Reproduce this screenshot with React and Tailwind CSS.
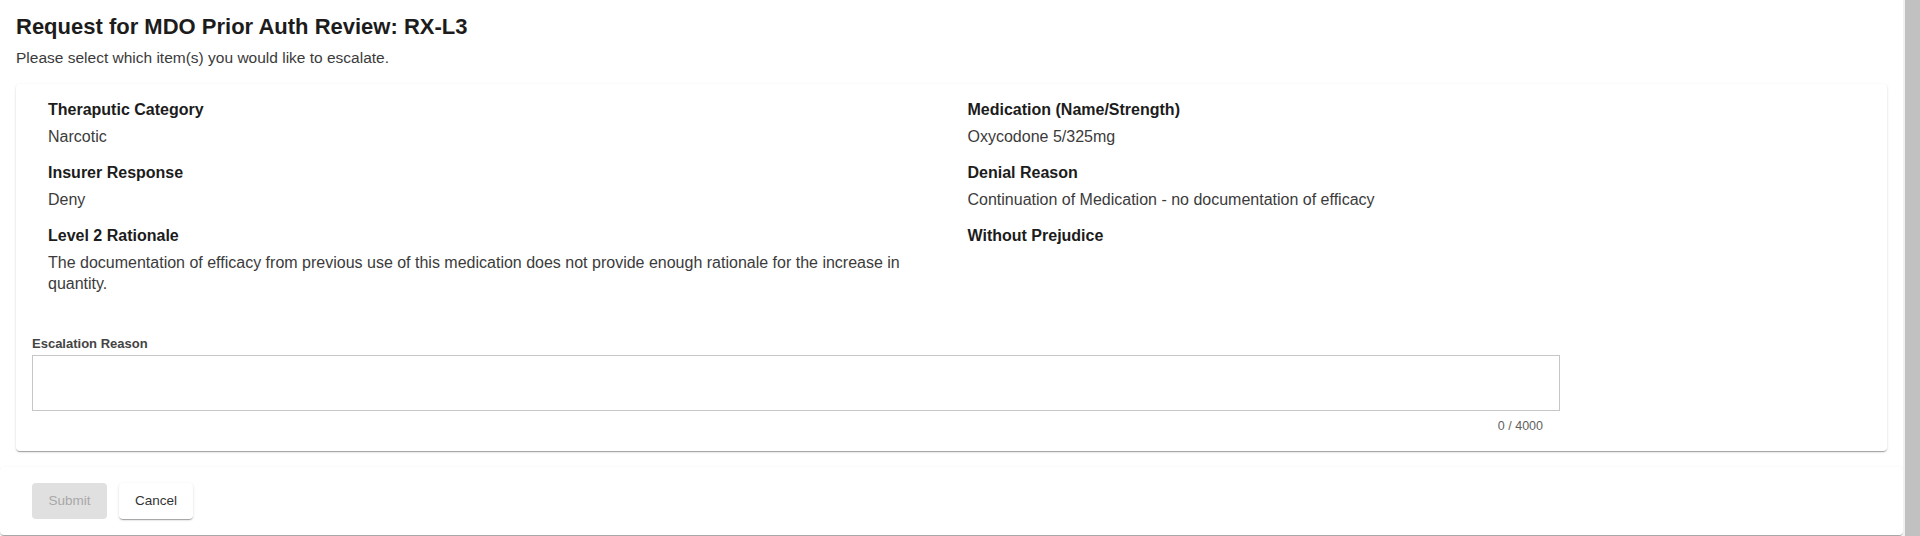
import { useState } from 'react';

const fields = [
  [
    { label: 'Theraputic Category', value: 'Narcotic' },
    { label: 'Insurer Response', value: 'Deny' },
    {
      label: 'Level 2 Rationale',
      value:
        'The documentation of efficacy from previous use of this medication does not provide enough rationale for the increase in quantity.',
    },
  ],
  [
    { label: 'Medication (Name/Strength)', value: 'Oxycodone 5/325mg' },
    { label: 'Denial Reason', value: 'Continuation of Medication - no documentation of efficacy' },
    { label: 'Without Prejudice', value: '' },
  ],
];

const paper =
  'bg-white rounded-[4px] shadow-[0_2px_1px_-1px_rgba(0,0,0,0.2),0_1px_1px_0_rgba(0,0,0,0.14),0_1px_3px_0_rgba(0,0,0,0.12)]';

export default function App() {
  const [reason, setReason] = useState('');

  return (
    <div className="flex h-[536px] w-full overflow-hidden bg-white font-['Liberation_Sans',Arial,sans-serif]">
      <main className="flex-1 flex flex-col">
        <div className="px-4">
          <h1 className="pt-[13px] text-[22px] leading-[28px] font-bold text-[#1c1c1c]">
            Request for MDO Prior Auth Review: RX-L3
          </h1>
          <p className="mt-[6px] text-[15.5px] leading-[21px] text-[#3b3b3b]">
            Please select which item(s) you would like to escalate.
          </p>

          {/* Details */}
          <section className={`${paper} mt-[16px] px-4 pt-[16px] pb-[18px]`}>
            <div className="grid grid-cols-2">
              {fields.map((col, i) => (
                <div key={i} className="flex flex-col gap-4 px-4">
                  {col.map(f => (
                    <div key={f.label}>
                      <p className="text-[16px] leading-[20px] font-bold text-[#1c1c1c]">{f.label}</p>
                      {f.value && (
                        <p className="mt-[6px] text-[16px] leading-[21px] text-[#3b3b3b]">{f.value}</p>
                      )}
                    </div>
                  ))}
                </div>
              ))}
            </div>

            <div className="w-[1528px] mt-[42px]">
              <label className="block text-[13px] leading-[16px] font-bold text-[#444]">Escalation Reason</label>
              <textarea
                value={reason}
                onChange={e => setReason(e.target.value)}
                maxLength={4000}
                className="mt-[3px] block w-full h-[56px] resize-none border border-[#c6c6c6] outline-none p-2 text-[15px]"
              />
              <p className="mt-[8px] pr-[17px] text-right text-[12.5px] leading-[14px] text-[#5f5f5f]">
                {reason.length} / 4000
              </p>
            </div>
          </section>
        </div>

        {/* Actions */}
        <footer className={`${paper} mt-[16px] h-[68px] flex items-center gap-3 pl-8`}>
          <button
            disabled
            className="w-[75px] h-[36px] rounded-[4px] bg-[#e0e0e0] text-[13.5px] text-[#a8a8a8]"
          >
            Submit
          </button>
          <button className={`${paper} w-[74px] h-[36px] text-[13.5px] text-[#333]`}>Cancel</button>
        </footer>
      </main>

      {/* scrollbar */}
      <div className="w-[17px] bg-[#f1f1f1] pl-[2px]">
        <div className="h-full bg-[#c1c1c1]" />
      </div>
    </div>
  );
}
